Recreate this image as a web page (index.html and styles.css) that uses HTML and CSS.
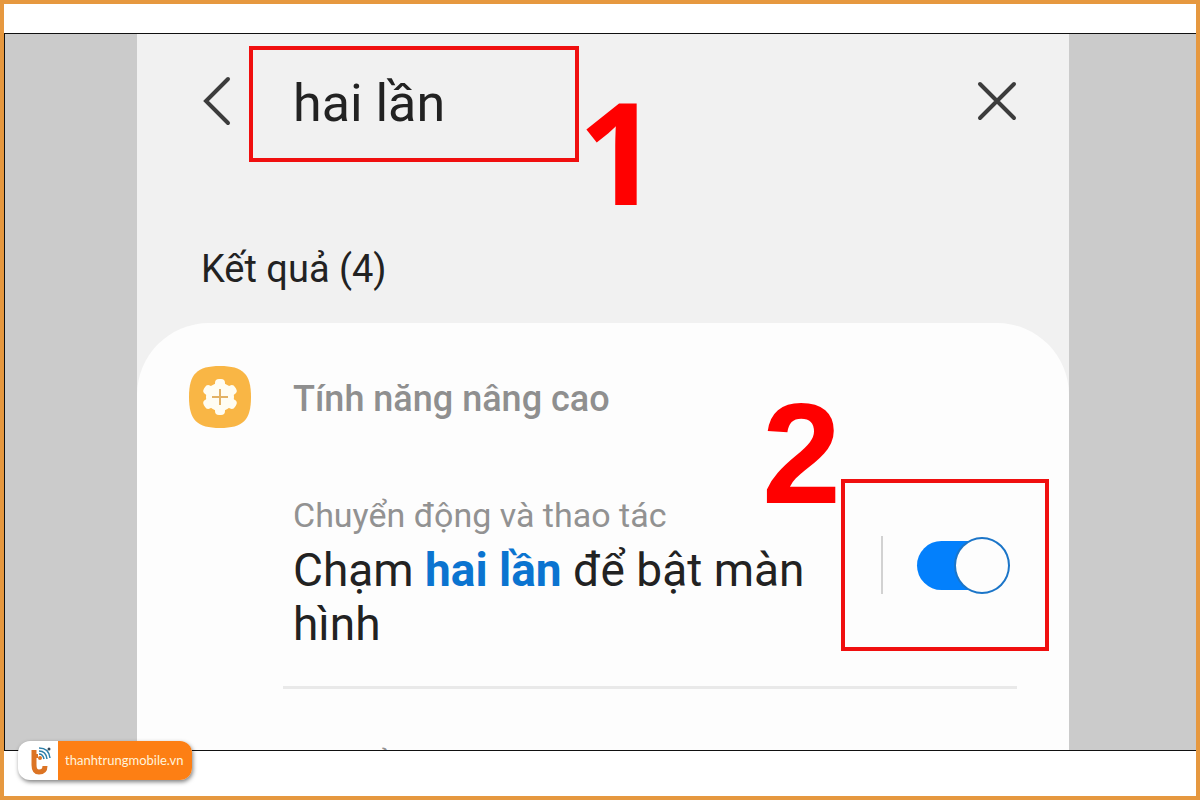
FILE: index.html
```html
<!DOCTYPE html>
<html lang="vi">
<head>
  <meta charset="UTF-8">
  <title>Chạm hai lần để bật màn hình</title>
  <link rel="stylesheet" href="styles.css">
</head>
<body>
  <main class="frame">
    <div class="screen">
      <header class="search-bar">
        <button class="icon-button" type="button" aria-label="Quay lại">
          <svg width="28" height="50" viewBox="0 0 28 50"><path d="M25 3 L3 25 L25 47"/></svg>
        </button>
        <div class="search-box">
          <input class="search-input" type="text" aria-label="Tìm kiếm" value="hai lần">
          <span class="step step-one">1</span>
        </div>
        <button class="icon-button close" type="button" aria-label="Đóng">
          <svg width="40" height="40" viewBox="0 0 40 40"><path d="M3 3 L37 37 M37 3 L3 37"/></svg>
        </button>
      </header>

      <h1 class="results-title">Kết quả (4)</h1>

      <section class="card">
        <div class="group">
          <svg class="group-icon" width="62" height="62" viewBox="0 0 62 62">
            <path fill="#f9b645" d="M31 0 C54 0 62 8 62 31 C62 54 54 62 31 62 C8 62 0 54 0 31 C0 8 8 0 31 0Z"/>
            <g fill="#fffdf2">
              <circle cx="31" cy="31" r="14"/>
              <rect x="26" y="13" width="10" height="36" rx="4"/>
              <rect x="26" y="13" width="10" height="36" rx="4" transform="rotate(60 31 31)"/>
              <rect x="26" y="13" width="10" height="36" rx="4" transform="rotate(120 31 31)"/>
            </g>
            <path stroke="#e3b264" stroke-width="2" d="M31 23 V39 M23 31 H39"/>
          </svg>
          <h2 class="group-name">Tính năng nâng cao</h2>
        </div>

        <div class="setting">
          <label class="setting-text" for="double-tap">
            <span class="path">Chuyển động và thao tác</span>
            <span class="name">Chạm <b>hai lần</b> để bật màn hình</span>
          </label>
          <div class="switch-box">
            <span class="divider"></span>
            <input class="switch" id="double-tap" type="checkbox" role="switch" checked>
            <span class="step step-two">2</span>
          </div>
        </div>

        <div class="setting next">
          <span class="path">Chuyển động và thao tác</span>
        </div>
      </section>
    </div>
  </main>

  <a class="brand" href="#">
    <span class="brand-logo">
      <svg width="24" height="30" viewBox="0 0 24 30">
        <path fill="none" stroke="#dc7424" stroke-width="5" d="M4 4 V19 Q4 26 9 26 Q15 26 15 20"/>
        <path fill="none" stroke="#dc7424" stroke-width="4" d="M4 10 H8"/>
        <circle cx="10" cy="12" r="2" fill="#dc7424"/>
        <g fill="none" stroke="#2d7fa8" stroke-width="1.5">
          <path d="M9 8 Q13 8 14 13"/>
          <path d="M9 5 Q16 5 17 13"/>
          <path d="M9 2 Q19 2 20 12"/>
        </g>
        <circle cx="19" cy="3" r="1.5" fill="#34495a"/>
      </svg>
    </span>
    <span class="brand-name">thanhtrungmobile.vn</span>
  </a>
</body>
</html>
```

FILE: styles.css
```css
*,
*::before {
  box-sizing: border-box;
}

body {
  margin: 0;
  height: 100vh;
  display: flex;
  flex-direction: column;
  padding: 29px 0 45px;
  border: 4px solid #e6983f;
  background: #fff;
  font-family: Roboto, "Liberation Sans", sans-serif;
  color: #222;
}

.frame {
  flex: 1;
  min-height: 0;
  overflow: hidden;
  display: flex;
  padding: 0 127px 0 132px;
  border: 1px solid #111;
  border-right: 0;
  background: #cbcbcb;
}

.screen {
  flex: 1;
  background: #f1f1f1;
}

/* search bar */
.search-bar {
  display: flex;
  align-items: center;
  padding: 12px 52px 0 66px;
}

.icon-button {
  display: flex;
  padding: 0 0 6px;
  border: 0;
  background: none;
}

.icon-button svg {
  fill: none;
  stroke: #3c3c3c;
  stroke-width: 4;
  stroke-linecap: round;
}

.close {
  margin-left: auto;
}

.search-box {
  position: relative;
  margin-left: 18px;
}

.search-input {
  display: block;
  width: 330px;
  height: 116px;
  padding: 0 40px 2px;
  border: 4px solid #f00f0f;
  background: none;
  font: 400 52px/60px Roboto, "Liberation Sans", sans-serif;
  color: #222;
}

/* red step numbers over the screen */
.step {
  position: absolute;
  font: bold 142px/142px "Liberation Sans", Arial, sans-serif;
  color: #f00;
}

.step-one {
  top: 33px;
  left: 329px;
  font-family: "Open Sans", "Liberation Sans", sans-serif;
}

.step-two {
  right: 204px;
  bottom: 122px;
}

.results-title {
  margin: 84px 64px 31px;
  font-size: 38px;
  font-weight: 400;
  line-height: 46px;
}

/* results card */
.card {
  padding: 43px 20px 0 52px;
  border-radius: 72px 72px 0 0;
  background: #fdfdfd;
}

.group {
  display: flex;
  align-items: center;
  gap: 42px;
}

.group-name {
  margin: 0;
  padding-top: 4px;
  font-size: 36px;
  font-weight: 500;
  line-height: 42px;
  color: #8f8f8f;
}

.setting {
  display: flex;
  justify-content: space-between;
  align-items: center;
  margin-top: 51px;
  padding-left: 104px;
}

.setting-text {
  flex: 1;
  padding-top: 16px;
}

.path {
  display: block;
  font-size: 34px;
  line-height: 40px;
  color: #929292;
}

.name {
  display: block;
  margin-top: 8px;
  font-size: 46px;
  line-height: 54px;
}

.name b {
  font-weight: 700;
  color: #0b74d0;
}

.switch-box {
  position: relative;
  display: flex;
  align-items: center;
  gap: 34px;
  width: 208px;
  height: 172px;
  padding-left: 36px;
  border: 4px solid #f00f0f;
}

.divider {
  width: 2px;
  height: 58px;
  background: #d2d2d2;
}

.switch {
  appearance: none;
  position: relative;
  width: 86px;
  height: 49px;
  margin: 0;
  border-radius: 25px;
  background: #0380fc;
}

.switch::before {
  content: "";
  position: absolute;
  top: -4px;
  right: -7px;
  width: 56px;
  height: 57px;
  border: 2px solid #1b75c8;
  border-radius: 50%;
  background: #fdfdfd;
}

.next {
  margin: 35px 32px 0 94px;
  padding: 55px 0 0 10px;
  border-top: 3px solid #e9e9e9;
}

/* site badge in the corner */
.brand {
  position: absolute;
  left: 18px;
  bottom: 20px;
  display: flex;
  overflow: hidden;
  height: 39px;
  border-radius: 12px;
  background: #fff;
  box-shadow: 1px 2px 4px rgba(0, 0, 0, 0.5);
  text-decoration: none;
}

.brand-logo {
  display: flex;
  align-items: center;
  padding: 0 4px 0 12px;
}

.brand-name {
  padding: 0 9px 0 7px;
  background: #fd7f14;
  font: 400 13px/38px Lato, sans-serif;
  color: #fff3dc;
}
```
